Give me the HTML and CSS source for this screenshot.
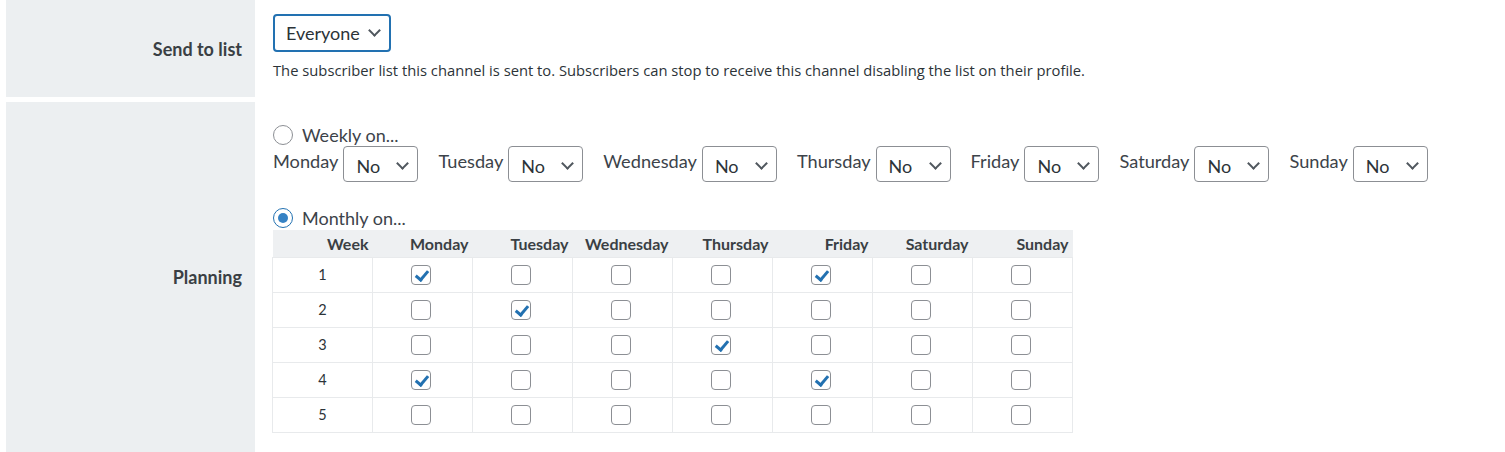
FILE: index.html
```html
<!DOCTYPE html>
<html lang="en">
<head>
    <meta charset="UTF-8">
    <title>Channel settings</title>
    <link rel="stylesheet" href="styles.css">
</head>
<body>
    <div class="form-table">
        <div class="form-row row-list">
            <div class="form-label">Send to list</div>
            <div class="form-field">
                <div class="select select-focus">Everyone <span class="chevron"></span></div>
                <p class="description">The subscriber list this channel is sent to. Subscribers can stop to receive this channel disabling the list on their profile.</p>
            </div>
        </div>

        <div class="form-row row-planning">
            <div class="form-label">Planning</div>
            <div class="form-field">
                <label class="radio-line"><span class="radio"></span>Weekly on...</label>
                <div class="weekly">
                    <div class="day"><span>Monday</span><div class="select select-small">No <span class="chevron"></span></div></div>
                    <div class="day"><span>Tuesday</span><div class="select select-small">No <span class="chevron"></span></div></div>
                    <div class="day"><span>Wednesday</span><div class="select select-small">No <span class="chevron"></span></div></div>
                    <div class="day"><span>Thursday</span><div class="select select-small">No <span class="chevron"></span></div></div>
                    <div class="day"><span>Friday</span><div class="select select-small">No <span class="chevron"></span></div></div>
                    <div class="day"><span>Saturday</span><div class="select select-small">No <span class="chevron"></span></div></div>
                    <div class="day"><span>Sunday</span><div class="select select-small">No <span class="chevron"></span></div></div>
                </div>

                <label class="radio-line monthly"><span class="radio checked"></span>Monthly on...</label>
                <table class="monthly-table">
                    <thead>
                        <tr>
                            <th>Week</th><th>Monday</th><th>Tuesday</th><th>Wednesday</th><th>Thursday</th><th>Friday</th><th>Saturday</th><th>Sunday</th>
                        </tr>
                    </thead>
                    <tbody>
                        <tr>
                            <td>1</td>
                            <td><span class="checkbox checked"></span></td>
                            <td><span class="checkbox"></span></td>
                            <td><span class="checkbox"></span></td>
                            <td><span class="checkbox"></span></td>
                            <td><span class="checkbox checked"></span></td>
                            <td><span class="checkbox"></span></td>
                            <td><span class="checkbox"></span></td>
                        </tr>
                        <tr>
                            <td>2</td>
                            <td><span class="checkbox"></span></td>
                            <td><span class="checkbox checked"></span></td>
                            <td><span class="checkbox"></span></td>
                            <td><span class="checkbox"></span></td>
                            <td><span class="checkbox"></span></td>
                            <td><span class="checkbox"></span></td>
                            <td><span class="checkbox"></span></td>
                        </tr>
                        <tr>
                            <td>3</td>
                            <td><span class="checkbox"></span></td>
                            <td><span class="checkbox"></span></td>
                            <td><span class="checkbox"></span></td>
                            <td><span class="checkbox checked"></span></td>
                            <td><span class="checkbox"></span></td>
                            <td><span class="checkbox"></span></td>
                            <td><span class="checkbox"></span></td>
                        </tr>
                        <tr>
                            <td>4</td>
                            <td><span class="checkbox checked"></span></td>
                            <td><span class="checkbox"></span></td>
                            <td><span class="checkbox"></span></td>
                            <td><span class="checkbox"></span></td>
                            <td><span class="checkbox checked"></span></td>
                            <td><span class="checkbox"></span></td>
                            <td><span class="checkbox"></span></td>
                        </tr>
                        <tr>
                            <td>5</td>
                            <td><span class="checkbox"></span></td>
                            <td><span class="checkbox"></span></td>
                            <td><span class="checkbox"></span></td>
                            <td><span class="checkbox"></span></td>
                            <td><span class="checkbox"></span></td>
                            <td><span class="checkbox"></span></td>
                            <td><span class="checkbox"></span></td>
                        </tr>
                    </tbody>
                </table>
            </div>
        </div>
    </div>
</body>
</html>
```

FILE: styles.css
```css
body {
    margin: 0;
    background: #fff;
    font-family: 'Lato', 'Liberation Sans', sans-serif;
    color: #3c434a;
}

.form-table {
    display: flex;
    flex-direction: column;
    gap: 5px;
    padding-left: 6px;
}

.form-row {
    display: flex;
}

.row-list {
    height: 97px;
}

.row-planning {
    height: 350px;
}

.form-label {
    width: 249px;
    flex-shrink: 0;
    background: #eceff1;
    display: flex;
    align-items: center;
    justify-content: flex-end;
    padding-right: 13px;
    box-sizing: border-box;
    font-size: 18px;
    font-weight: bold;
    color: #3a3f44;
}

.form-field {
    padding-left: 18px;
}

.row-list .form-field {
    padding-top: 14px;
}

.row-planning .form-field {
    padding-top: 22px;
}

/* selects */
.select {
    display: inline-flex;
    align-items: center;
    justify-content: space-between;
    box-sizing: border-box;
    border: 1px solid #8c8f94;
    border-radius: 4px;
    background: #fff;
    color: #2c3338;
    font-size: 18px;
}

.select-focus {
    width: 118px;
    height: 38px;
    border: 2px solid #2271b1;
    padding: 0 10px 0 11px;
}

.select-small {
    width: 75px;
    height: 36px;
    padding: 4px 10px 0 12px;
}

.chevron {
    width: 7px;
    height: 7px;
    border-right: 2px solid #50575e;
    border-bottom: 2px solid #50575e;
    transform: rotate(45deg);
    margin-top: -5px;
}

.select-small .chevron {
    margin-top: -8px;
}

.description {
    margin: 8px 0 0;
    font-family: 'Open Sans', sans-serif;
    font-size: 14.75px;
    color: #2c3338;
}

/* radios */
.radio-line {
    display: flex;
    align-items: center;
    gap: 9px;
    font-size: 18px;
    height: 22px;
}

.radio {
    width: 20px;
    height: 20px;
    box-sizing: border-box;
    border: 1px solid #8c8f94;
    border-radius: 50%;
    display: flex;
    align-items: center;
    justify-content: center;
}

.radio.checked {
    border-color: #2271b1;
}

.radio.checked::before {
    content: "";
    width: 10px;
    height: 10px;
    border-radius: 50%;
    background: #3582c4;
}

.weekly {
    display: flex;
    gap: 20px;
}

.day {
    display: flex;
    align-items: center;
    gap: 5px;
    font-size: 18.2px;
}

.day span:first-child {
    margin-top: -6px;
}

.monthly {
    margin-top: 25px;
}

/* table */
.monthly-table {
    border-collapse: collapse;
    margin: 1px 0 0 -1px;
    table-layout: fixed;
    width: 800px;
}

.monthly-table th {
    background: #eef0f2;
    height: 27px;
    padding: 0 4px 0 0;
    text-align: right;
    font-size: 16px;
    font-weight: bold;
    color: #3a3f44;
    width: 100px;
    box-sizing: border-box;
}

.monthly-table td {
    height: 34px;
    border: 1px solid #e8eaec;
    text-align: center;
    padding: 0 4px 0 0;
    font-size: 14.5px;
    color: #2c3338;
}

.monthly-table td:first-child {
    padding: 0;
}

.checkbox {
    display: inline-block;
    width: 20px;
    height: 20px;
    box-sizing: border-box;
    border: 1px solid #8c8f94;
    border-radius: 4px;
    vertical-align: middle;
    position: relative;
}

.checkbox.checked::before {
    content: "";
    position: absolute;
    left: 6px;
    top: 2px;
    width: 5px;
    height: 10px;
    border-right: 3px solid #2271b1;
    border-bottom: 3px solid #2271b1;
    transform: rotate(40deg);
}
```
